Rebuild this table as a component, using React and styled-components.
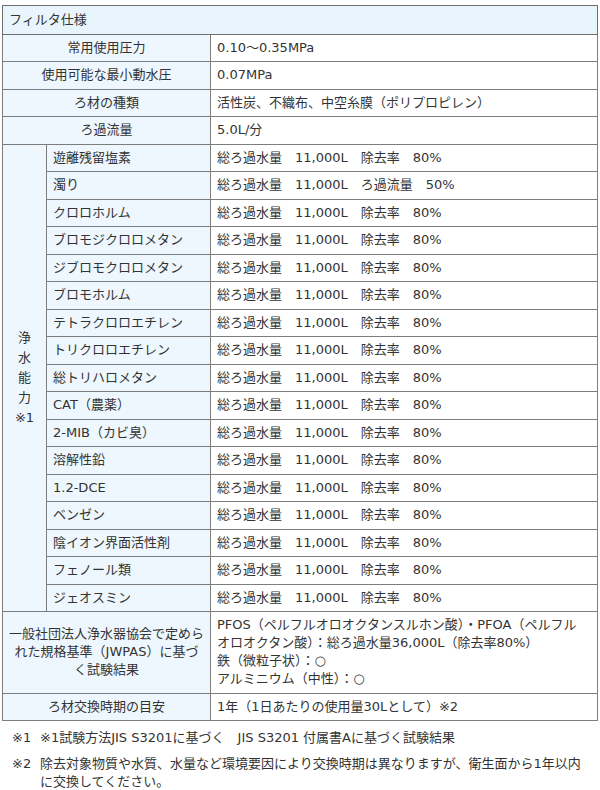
import styled, { createGlobalStyle } from "styled-components"

const GlobalStyle = createGlobalStyle`
body {
  margin: 0;
  background: #fff;
  color: #333;
  font-family: "DejaVu Sans", "Noto Sans CJK JP", sans-serif;
  font-size: 13px;
}
`;

const Page = styled.div`
width: 600px;
padding: 5px 2px 0;
box-sizing: border-box;
`;

const SpecTable = styled.table`
width: 596px;
border-collapse: collapse;
table-layout: fixed;
border: 1px solid #6e6e6e;
`;

const Cell = styled.td`
border: 1px solid #7d7d7d;
padding: 4px ${({ $label }) => ($label ? "6px" : "10px")} 4.5px 6px;
line-height: 18px;
vertical-align: middle;
text-align: ${({ $center }) => ($center ? "center" : "left")};
background: ${({ $label }) => ($label ? "#eef7fd" : "#fff")};
`;

const HeadCell = styled.th`
border: 1px solid #6e6e6e;
padding: 5px 6px 4.5px;
line-height: 18px;
font-weight: normal;
text-align: left;
background: #e9f5fd;
`;

const VerticalLabel = styled.div`
display: flex;
flex-direction: column;
align-items: center;
line-height: 20px;
white-space: nowrap;
`;

const Notes = styled.ul`
list-style: none;
margin: 8px 0 0;
padding: 0 8px 0 10px;
display: flex;
flex-direction: column;
gap: 8px;
`;

const Note = styled.li`
display: flex;
line-height: 18px;
`;

const NoteMark = styled.span`
flex: 0 0 28px;
`;

const sp = "\u3000";

const items = [
  ["遊離残留塩素", `総ろ過水量${sp}11,000L${sp}除去率${sp}80%`],
  ["濁り", `総ろ過水量${sp}11,000L${sp}ろ過流量${sp}50%`],
  ["クロロホルム"],
  ["ブロモジクロロメタン"],
  ["ジブロモクロロメタン"],
  ["ブロモホルム"],
  ["テトラクロロエチレン"],
  ["トリクロロエチレン"],
  ["総トリハロメタン"],
  ["CAT（農薬）"],
  ["2-MIB（カビ臭）"],
  ["溶解性鉛"],
  ["1.2-DCE"],
  ["ベンゼン"],
  ["陰イオン界面活性剤"],
  ["フェノール類"],
  ["ジェオスミン"],
];

const basic = [
  ["常用使用圧力", "0.10～0.35MPa"],
  ["使用可能な最小動水圧", "0.07MPa"],
  ["ろ材の種類", "活性炭、不織布、中空糸膜（ポリプロピレン）"],
  ["ろ過流量", "5.0L/分"],
];

const App = () => {
  const fallback = `総ろ過水量${sp}11,000L${sp}除去率${sp}80%`;
  return (
    <Page>
      <GlobalStyle />
      <SpecTable>
        <colgroup>
          <col style={{ width: 44 }} />
          <col style={{ width: 164 }} />
          <col />
        </colgroup>
        <thead>
          <tr>
            <HeadCell colSpan={3}>フィルタ仕様</HeadCell>
          </tr>
        </thead>
        <tbody>
          {basic.map(([label, value]) => (
            <tr key={label}>
              <Cell $label $center colSpan={2}>{label}</Cell>
              <Cell>{value}</Cell>
            </tr>
          ))}
          {items.map(([label, value], i) => (
            <tr key={label}>
              {i === 0 && (
                <Cell $label $center rowSpan={items.length}>
                  <VerticalLabel>
                    {["浄", "水", "能", "力", "※1"].map((c) => (
                      <span key={c}>{c}</span>
                    ))}
                  </VerticalLabel>
                </Cell>
              )}
              <Cell $label>{label}</Cell>
              <Cell>{value || fallback}</Cell>
            </tr>
          ))}
          <tr>
            <Cell $label $center colSpan={2}>
              一般社団法人浄水器協会で定められた規格基準（JWPAS）に基づく試験結果
            </Cell>
            <Cell>
              PFOS（ペルフルオロオクタンスルホン酸）・PFOA（ペルフルオロオクタン酸）：総ろ過水量36,000L（除去率80%）
              <br />鉄（微粒子状）：○
              <br />アルミニウム（中性）：○
            </Cell>
          </tr>
          <tr>
            <Cell $label $center colSpan={2}>ろ材交換時期の目安</Cell>
            <Cell>1年（1日あたりの使用量30Lとして）※2</Cell>
          </tr>
        </tbody>
      </SpecTable>
      <Notes>
        <Note>
          <NoteMark>※1</NoteMark>
          <span>※1試験方法JIS S3201に基づく{sp}JIS S3201 付属書Aに基づく試験結果</span>
        </Note>
        <Note>
          <NoteMark>※2</NoteMark>
          <span>除去対象物質や水質、水量など環境要因により交換時期は異なりますが、衛生面から1年以内に交換してください。</span>
        </Note>
      </Notes>
    </Page>
  )
}

export default App;
